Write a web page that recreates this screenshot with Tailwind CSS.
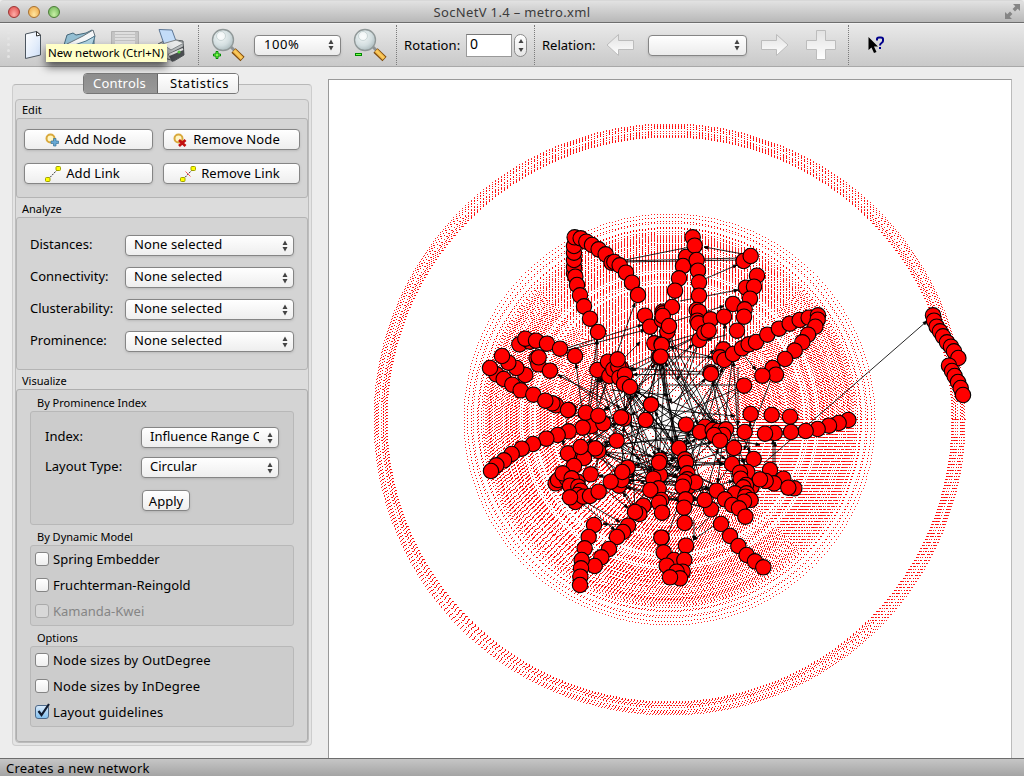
<!DOCTYPE html>
<html lang="en">
<head>
<meta charset="utf-8">
<title>SocNetV 1.4 – metro.xml</title>
<script src="https://cdn.jsdelivr.net/npm/@tailwindcss/browser@4"></script>
</head>
<body class="w-[1024px] h-[776px] overflow-hidden bg-[#ededed] font-['Noto_Sans',sans-serif] text-[13px] leading-4 text-black flex flex-col">
<svg width="0" height="0" class="absolute">
  <defs>
    <linearGradient id="gold" x1="0" y1="1" x2="1" y2="0"><stop offset="0" stop-color="#b96a10"/><stop offset=".5" stop-color="#ffd060"/><stop offset="1" stop-color="#c97a18"/></linearGradient>
    <radialGradient id="glass" cx=".4" cy=".35" r=".7"><stop offset="0" stop-color="#f4f8f8"/><stop offset=".6" stop-color="#d3dee0"/><stop offset="1" stop-color="#a9b8bb"/></radialGradient>
    <linearGradient id="paper" x1="0" y1="0" x2="1" y2="1"><stop offset="0" stop-color="#fff"/><stop offset="1" stop-color="#cfe0f8"/></linearGradient>
    <linearGradient id="pale" x1="0" y1="0" x2="0" y2="1"><stop offset="0" stop-color="#e2e2e2"/><stop offset="1" stop-color="#fff"/></linearGradient>
    <symbol id="updown" viewBox="0 0 6 12"><path d="M3 0.5 5.500 5h-5zM3 11.500 5.500 7h-5z" fill="#444"/></symbol>
    <symbol id="lens" viewBox="0 0 34 34">
      <path d="M20 19l4 4" stroke="#8d9294" stroke-width="3"/>
      <path d="M22.500 22.500l9 8.500" stroke="#7b4709" stroke-width="6"/>
      <path d="M23 22.500l8 8" stroke="url(#gold)" stroke-width="4"/>
      <circle cx="12" cy="12" r="10.500" fill="url(#glass)" stroke="#909898" stroke-width="1.300"/>
      <circle cx="10" cy="8" r="4.500" fill="#fff" fill-opacity=".55" stroke="#bccaca" stroke-width=".7"/>
    </symbol>
  </defs>
</svg>

<header class="h-[23px] shrink-0 grid grid-cols-[1fr_auto_1fr] items-center rounded-t border-t border-b border-t-[#d8d8d8] border-b-[#6d6d6d] bg-linear-to-b from-[#e2e2e2] to-[#b8b8b8]">
  <div class="flex gap-2 pl-2">
    <span class="size-3 rounded-full border border-[#9c3432] bg-radial-[at_50%_75%] from-[#ffaea8] to-[#dc4443]"></span>
    <span class="size-3 rounded-full border border-[#a8702e] bg-radial-[at_50%_75%] from-[#ffe6a0] to-[#eda23f]"></span>
    <span class="size-3 rounded-full border border-[#4b7c37] bg-radial-[at_50%_75%] from-[#c9f0a6] to-[#66b050]"></span>
  </div>
  <h1 class="text-[13px] tracking-[0.35px] text-[#3b3b3b] whitespace-nowrap">SocNetV 1.4 – metro.xml</h1>
  <svg class="justify-self-end mr-[4px]" width="15" height="15" viewBox="0 0 15 15" fill="#858585"><path d="M8 0h7v7l-2.300-2.300L10 7.400 7.600 5l2.700-2.700zM0 15V8l2.300 2.300L5 7.600 7.400 10l-2.700 2.700L7 15z"/></svg>
</header>

<div class="relative h-11 shrink-0 flex items-center border-t border-b border-t-[#f2f2f2] border-b-[#a8a8a8] bg-linear-to-b from-[#e9e9e9] to-[#c9c9c9]">
  <div class="w-[24px] pl-[7px] flex flex-col gap-[3px] pb-0.5"><i class="size-[3px] rounded-full bg-[#e4e4e4]"></i><i class="size-[3px] rounded-full bg-[#e4e4e4]"></i><i class="size-[3px] rounded-full bg-[#e4e4e4]"></i><i class="size-[3px] rounded-full bg-[#e4e4e4]"></i><i class="size-[3px] rounded-full bg-[#e4e4e4]"></i></div>
  <svg width="174" height="42" viewBox="24 24 174 42" class="shrink-0">
    <path d="M25.500 34l11-2.500 4 3.500v20l-15 3.500z" fill="url(#paper)" stroke="#4c5660"/><path d="M36.500 31.500v4.500l4-1z" fill="#fff" stroke="#333"/>
    <path d="M64 45l3-10 6-2 3 2 10-2 6-3 2 5v18H66z" fill="#93bed2" stroke="#45677a"/><path d="M67 44l16-8 10-6 2 6-18 12z" fill="#f4f6f8" stroke="#68747c"/><path d="M66 48l20-7 9-5-5 18H68z" fill="#b3d6e5" stroke="#4d7488"/>
    <path d="M111.500 31.500h27v26h-27z" fill="#c4c4c4" stroke="#b2b2b2"/><path d="M115 32h20v12h-20z" fill="#dedede"/><path d="M115 34.500h20M115 37.500h20M115 40.500h20" stroke="#c2c2c2"/>
    <path d="M158 44l10-5 15 2 1 14-10 6-16-5z" fill="#b8bbbc" stroke="#52575a"/><path d="M168 54l16-8v9l-12 7z" fill="#4a4d50"/><path d="M169 55l14-6" stroke="#ddd" stroke-width="2"/><path d="M159 29.500l13 .5 4 11-12 3z" fill="#c3dcf8" stroke="#5c7695"/><path d="M162 44l14-4 8 3-13 7z" fill="#e8e9e9" stroke="#83888a"/><circle cx="179" cy="52" r="1.500" fill="#4fca3b"/>
  </svg>
  <div class="h-10 border-l border-dotted border-[#7a7a7a]"></div>
  <div class="relative ml-[12px] size-[34px] shrink-0"><svg width="34" height="34"><use href="#lens"/></svg><svg class="absolute left-[2px] top-[23px]" width="8" height="8" viewBox="0 0 8 8"><path d="M3 .5h2V3h2.500v2H5v2.500H3V5H.5V3H3z" fill="#7cff4e" stroke="#008a00"/></svg></div>
  <div class="ml-[9px] w-[87px] h-[21px] shrink-0 rounded-[4px] border border-[#858585] bg-linear-to-b from-white via-[#f5f5f5] to-[#ececec] shadow-sm flex items-center justify-between pl-[9px] pr-[6px]"><span class="pb-[2px] tracking-[0.6px]">100%</span><svg width="6" height="12"><use href="#updown"/></svg></div>
  <div class="relative ml-[12px] size-[34px] shrink-0"><svg width="34" height="34"><use href="#lens"/></svg><i class="absolute left-[2px] top-[25px] w-[7px] h-[3px] border border-[#008a00] bg-[#7cff4e]"></i></div>
  <div class="ml-[9px] h-10 border-l border-dotted border-[#7a7a7a]"></div>
  <span class="ml-[7px] w-[62px] whitespace-nowrap tracking-[0.1px]">Rotation:</span>
  <div class="w-[46px] h-[23px] border border-[#999] border-t-[#777] bg-white pl-[3px] text-[14px] leading-[18px]">0</div>
  <div class="ml-[2px] w-[13px] h-[23px] rounded-full border border-[#8b8b8b] bg-linear-to-b from-white to-[#e6e6e6] flex items-center justify-center"><svg width="6" height="15" viewBox="0 0 6 15"><path d="M3 1 5.500 5h-5zM3 14 5.500 10h-5z" fill="#444"/></svg></div>
  <div class="ml-[7px] h-10 border-l border-dotted border-[#7a7a7a]"></div>
  <span class="ml-[7px] w-[64px] whitespace-nowrap">Relation:</span>
  <svg width="28" height="24" viewBox="0 0 28 24" class="shrink-0"><path d="M1 12 12.500 1.500V7.500h15v9h-15v6z" fill="url(#pale)" stroke="#bcbcbc"/></svg>
  <div class="ml-[14px] w-[99px] h-[21px] shrink-0 rounded-[4px] border border-[#858585] bg-linear-to-b from-white via-[#f5f5f5] to-[#ececec] shadow-sm flex items-center justify-end pr-[6px]"><svg width="6" height="12"><use href="#updown"/></svg></div>
  <svg width="28" height="24" viewBox="0 0 28 24" class="ml-[14px] shrink-0"><path d="M27 12 15.500 1.500V7.500H.5v9h15v6z" fill="url(#pale)" stroke="#bcbcbc"/></svg>
  <svg width="30" height="30" viewBox="0 0 30 30" class="ml-[17px] shrink-0"><path d="M10.500.5h9v10h10v9h-10v10h-9v-10H.5v-9h10z" fill="url(#pale)" stroke="#bcbcbc"/></svg>
  <div class="ml-[12px] h-10 border-l border-dotted border-[#7a7a7a]"></div>
  <svg width="18" height="18" viewBox="0 0 18 18" class="ml-[19px] shrink-0"><path d="M.5 1v13l3-2.500L6 17l2.500-1L6 10.500h4z"/><path d="M9 4.500V3q0-1.500 2-1.500h2q2 0 2 1.500v2q0 1-1.500 2T12 9.500M12 11v2" fill="none" stroke="#00008b" stroke-width="2"/></svg>
  <div class="absolute left-[46px] top-[20px] w-[121px] h-[18px] bg-[#ffffc8] shadow-[0_5px_9px_rgba(0,0,0,.6)] pl-[2px] text-[11.500px] leading-[18px] whitespace-nowrap">New network (Ctrl+N)</div>
</div>

<div class="flex h-[691px] shrink-0">
  <aside class="relative w-[328px] pl-[12px] pt-[17px]">
    <div class="absolute left-[83px] top-[6px] h-[21px] w-[156px] flex text-center leading-[18px] rounded-[4px] border border-[#777] overflow-hidden">
      <div class="w-[74px] bg-linear-to-b from-[#8d8d8d] to-[#999] border-r border-[#666] text-white pr-[2px] tracking-[0.2px]">Controls</div><div class="grow bg-linear-to-b from-white to-[#eee] pl-[3px] tracking-[0.5px]">Statistics</div>
    </div>
    <div class="w-[300px] h-[662px] rounded-[4px] border border-[#cdcdcd] border-t-[#b8b8b8] bg-[#e4e4e4] pt-[14px] px-[2px]">
      <div class="h-[644px] rounded-[4px] border border-[#bcbcbc] bg-[#dcdcdc] flex flex-col text-[11px]">
        <h2 class="h-[18px] pl-[6px] leading-[20px]">Edit</h2>
        <section class="h-[80px] rounded-[3px] border border-[#b4b4b4] bg-[#d4d4d4] grid grid-cols-[129px_137px] gap-x-[10px] gap-y-[13px] content-start pt-[10px] pl-[7px] text-[13px]">
          <button class="h-[21px] rounded-[4px] border border-[#858585] bg-linear-to-b from-white to-[#eee] shadow-sm flex items-center justify-center gap-[6px] leading-none pr-[6px] tracking-[0.1px]"><svg width="14" height="14" viewBox="0 0 14 14"><circle cx="5.500" cy="5.500" r="4" fill="#fff6c4" stroke="#d9a93c" stroke-width="2"/><path d="M8.500 5.500h2.500V8h2.500v2.500H11V13H8.500v-2.500H6V8h2.500z" fill="#67a9d6" stroke="#3a7297" stroke-width=".7"/></svg>Add Node</button>
          <button class="h-[21px] rounded-[4px] border border-[#858585] bg-linear-to-b from-white to-[#eee] shadow-sm flex items-center justify-center gap-[6px] leading-none pr-[10px] tracking-[0.1px]"><svg width="14" height="14" viewBox="0 0 14 14"><circle cx="5.500" cy="5.500" r="4" fill="#fff6c4" stroke="#d9a93c" stroke-width="2"/><path d="M6 7l6.500 6M12.500 7L6 13" stroke="#c21010" stroke-width="2.700"/></svg>Remove Node</button>
          <button class="h-[21px] rounded-[4px] border border-[#858585] bg-linear-to-b from-white to-[#eee] shadow-sm flex items-center justify-center gap-[5px] leading-none pr-[12px] tracking-[0.1px]"><svg width="16" height="16" viewBox="0 0 16 16"><path d="M3 13.500L13 3" stroke="#333" stroke-dasharray="2 1"/><rect x=".5" y="11.500" width="4.500" height="4" rx="1" fill="#ff0" stroke="#a0a000"/><rect x="11" y=".5" width="4.500" height="4" rx="1" fill="#ff0" stroke="#a0a000"/></svg>Add Link</button>
          <button class="h-[21px] rounded-[4px] border border-[#858585] bg-linear-to-b from-white to-[#eee] shadow-sm flex items-center justify-center gap-[5px] leading-none pr-[3px] tracking-[0.1px]"><svg width="16" height="16" viewBox="0 0 16 16"><path d="M3 13.500L13 3" stroke="#333" stroke-dasharray="2 1"/><path d="M5.500 5.500l5 5" stroke="#f55"/><rect x=".5" y="11.500" width="4.500" height="4" rx="1" fill="#ff0" stroke="#a0a000"/><rect x="11" y=".5" width="4.500" height="4" rx="1" fill="#ff0" stroke="#a0a000"/></svg>Remove Link</button>
        </section>
        <h2 class="h-[19px] pl-[6px] leading-[21px]">Analyze</h2>
        <section class="h-[153px] rounded-[3px] border border-[#b4b4b4] bg-[#d4d4d4] pl-[13px] pt-[17px] flex flex-col gap-[11px] text-[13px]">
          <label class="flex h-[21px]"><span class="w-[95px] leading-[18px]">Distances:</span><span class="w-[169px] rounded-[4px] border border-[#858585] bg-linear-to-b from-white to-[#eee] shadow-sm flex items-center justify-between pl-2 pr-[5px] leading-[17px]"><span class="pb-0.5 tracking-[0.1px]">None selected</span><svg width="6" height="12"><use href="#updown"/></svg></span></label>
          <label class="flex h-[21px]"><span class="w-[95px] leading-[18px]">Connectivity:</span><span class="w-[169px] rounded-[4px] border border-[#858585] bg-linear-to-b from-white to-[#eee] shadow-sm flex items-center justify-between pl-2 pr-[5px] leading-[17px]"><span class="pb-0.5 tracking-[0.1px]">None selected</span><svg width="6" height="12"><use href="#updown"/></svg></span></label>
          <label class="flex h-[21px]"><span class="w-[95px] leading-[18px]">Clusterability:</span><span class="w-[169px] rounded-[4px] border border-[#858585] bg-linear-to-b from-white to-[#eee] shadow-sm flex items-center justify-between pl-2 pr-[5px] leading-[17px]"><span class="pb-0.5 tracking-[0.1px]">None selected</span><svg width="6" height="12"><use href="#updown"/></svg></span></label>
          <label class="flex h-[21px]"><span class="w-[95px] leading-[18px]">Prominence:</span><span class="w-[169px] rounded-[4px] border border-[#858585] bg-linear-to-b from-white to-[#eee] shadow-sm flex items-center justify-between pl-2 pr-[5px] leading-[17px]"><span class="pb-0.5 tracking-[0.1px]">None selected</span><svg width="6" height="12"><use href="#updown"/></svg></span></label>
        </section>
        <h2 class="h-[19px] pl-[6px] leading-[21px]">Visualize</h2>
        <section class="h-[353px] rounded-[3px] border border-[#aeaeae] bg-[#d4d4d4] px-[13px] flex flex-col">
          <h3 class="h-[21px] pl-[7px] leading-[26px]">By Prominence Index</h3>
          <div class="h-[114px] rounded-[3px] border border-[#b8b8b8] bg-[#ccc] pl-[14px] pt-[15px] text-[13px]">
            <label class="flex h-[21px]"><span class="w-[96px] leading-[18px]">Index:</span><span class="w-[138px] rounded-[4px] border border-[#858585] bg-linear-to-b from-white to-[#eee] shadow-sm flex items-center justify-between pl-2 pr-[5px] leading-[17px]"><span class="pb-0.5 w-[109px] overflow-hidden whitespace-nowrap">Influence Range Closeness</span><svg width="6" height="12"><use href="#updown"/></svg></span></label>
            <label class="flex h-[21px] mt-[9px]"><span class="w-[96px] leading-[18px]">Layout Type:</span><span class="w-[138px] rounded-[4px] border border-[#858585] bg-linear-to-b from-white to-[#eee] shadow-sm flex items-center justify-between pl-2 pr-[5px] leading-[17px]"><span class="pb-0.5">Circular</span><svg width="6" height="12"><use href="#updown"/></svg></span></label>
            <button class="ml-[97px] mt-[12px] w-[48px] h-[21px] rounded-[4px] border border-[#858585] bg-linear-to-b from-white to-[#eee] shadow-sm leading-[18px]">Apply</button>
          </div>
          <h3 class="h-[20px] pl-[7px] leading-[24px]">By Dynamic Model</h3>
          <div class="h-[81px] rounded-[3px] border border-[#b8b8b8] bg-[#ccc] pl-[4px] pt-[5px] flex flex-col gap-[10px] text-[13px]">
            <label class="flex items-center h-4 gap-1"><i class="size-[14px] rounded-[3px] border border-[#858585] bg-linear-to-b from-white to-[#eee]"></i>Spring Embedder</label>
            <label class="flex items-center h-4 gap-1"><i class="size-[14px] rounded-[3px] border border-[#858585] bg-linear-to-b from-white to-[#eee]"></i>Fruchterman-Reingold</label>
            <label class="flex items-center h-4 gap-1 text-[#858585]"><i class="size-[14px] rounded-[3px] border border-[#aaa] bg-[#d8d8d8]"></i>Kamanda-Kwei</label>
          </div>
          <h3 class="h-[20px] pl-[7px] leading-[23px]">Options</h3>
          <div class="h-[81px] rounded-[3px] border border-[#b8b8b8] bg-[#ccc] pl-[4px] pt-[5px] flex flex-col gap-[10px] text-[13px] tracking-[0.15px]">
            <label class="flex items-center h-4 gap-1"><i class="size-[14px] rounded-[3px] border border-[#858585] bg-linear-to-b from-white to-[#eee]"></i>Node sizes by OutDegree</label>
            <label class="flex items-center h-4 gap-1"><i class="size-[14px] rounded-[3px] border border-[#858585] bg-linear-to-b from-white to-[#eee]"></i>Node sizes by InDegree</label>
            <label class="flex items-center h-4 gap-1"><i class="size-[14px] rounded-[3px] border border-[#4c6889] bg-linear-to-b from-[#d7e9fa] to-[#83c0ee]"><svg class="-mt-[3px]" width="15" height="15" viewBox="0 0 15 15"><path d="M2.500 8l3 4L13 1" fill="none" stroke="#111c30" stroke-width="2.200"/></svg></i>Layout guidelines</label>
          </div>
        </section>
      </div>
    </div>
  </aside>
  <main class="relative mt-[12px] w-[684px] h-[679px] border-t border-l border-r border-[#999] border-r-[#bbb] bg-white">
    <canvas id="rings" width="682" height="678" class="absolute left-0 top-0"></canvas>
    <svg class="relative" width="682" height="678" viewBox="329 80 682 678"><g id="edges" stroke="#000" stroke-width="1" stroke-opacity=".85"></g><g id="nodes" fill="#f00" stroke="#000" stroke-width="1.100"></g></svg>
  </main>
</div>

<footer class="h-[18px] shrink-0 border-t border-[#6d6d6d] bg-linear-to-b from-[#c6c6c6] to-[#a4a4a4] pl-[6px] leading-[18px] tracking-[0.2px]">Creates a new network</footer>

<script>
// Each tile: origin in scene units, then node centres in thirds of a unit.
const tiles = [
[470,210,"312,190 312,171 312,150 312,128 312,108 316,200 321,225 330,256 342,289 360,326 384,366 314,82 332,85 349,95 366,105 386,118 407,133 425,158 433,156 449,166 468,188 486,218 504,255 148,403 180,395 166,386 198,392 231,401 270,416 315,438 200,445 205,463 206,442 240,482 166,495 139,474 115,458 96,438 79,493 60,474 101,507 127,524 152,541 190,554 258,586 247,580 226,572 296,600 382,480 418,498 414,455 430,478 453,474 445,470 443,448 448,503 465,494 462,522 480,531 525,317 540,350 578,305 576,330 543,583 553,400 575,402 566,442 570,440"],
[660,210,"98,82 78,141 104,107 69,168 57,205 110,150 114,182 45,242 117,217 117,257 10,310 36,291 110,300 117,305 112,332 115,340 118,390 133,368 152,328 146,362 192,320 219,282 251,153 272,138 291,197 258,233 282,230 270,266 254,298 252,320 231,362 8,318 22,365 27,348 5,405 2,440 190,418 180,442 193,450 219,432 246,415 266,403 288,396 322,374 357,356 389,341 419,330 446,323 474,316 473,329 466,350 444,374 427,397 404,422 375,447 338,474 348,494 307,497 252,527 152,487 153,492"],
[470,400,"294,30 364,78 400,70 338,83 347,38 385,47 296,94 263,105 229,116 189,132 155,146 125,162 102,181 79,196 63,213 462,56 453,52 527,60 543,14 440,122 385,153 376,145 333,165 342,174 294,160 332,141 312,198 362,223 257,250 264,240 290,235 278,220 322,245 305,235 300,257 325,260 332,272 322,285 316,306 340,290 300,292 360,288 386,275 447,257 455,240 473,203 457,216 422,245 570,225 570,180 567,188 550,236 566,265 541,270 574,300 567,308 576,338 520,317 508,342 495,336 474,377 459,396 441,411 417,447 394,472 374,498 372,375 356,411 344,445 335,480 333,505 331,530 330,555 575,413"],
[660,400,"272,42 335,45 390,50 565,60 536,69 507,77 473,87 437,93 393,96 344,99 315,101 254,96 78,74 135,80 120,96 158,90 175,93 198,88 190,105 162,105 180,122 222,144 281,177 57,144 75,178 78,188 82,220 82,238 85,260 106,247 72,245 68,260 77,298 72,323 74,369 78,437 262,216 216,192 240,218 242,236 275,260 258,255 250,262 225,280 260,280 256,290 272,300 252,305 170,272 195,298 153,328 134,300 217,315 237,325 256,350 330,210 370,236 342,250 317,243 300,238 403,265 385,263 183,372 210,408 235,438 260,465 285,484 310,502 4,413 11,457 42,480 20,497 73,480 68,515 50,515 60,535 30,532"],
[840,290,"279,76 282,92 290,110 300,124 309,139 321,157 333,170 342,184 355,204 327,227 336,243 344,258 354,276 362,294 369,315"]];
const NS = "http://www.w3.org/2000/svg", CX = 669.5, CY = 419.5;
const add = (g, tag, a) => { const e = document.createElementNS(NS, tag); for (const k in a) e.setAttribute(k, a[k]); g.appendChild(e); };
const pts = tiles.flatMap(([x, y, s]) => s.split(" ").map(p => { const [a, b] = p.split(",").map(Number); return [x + a / 3, y + b / 3]; }));
const edges = document.getElementById("edges"), nodes = document.getElementById("nodes");

// Guideline rings: aliased dots, one in three steps along the major axis, clockwise from 3 o'clock.
const ctx = document.getElementById("rings").getContext("2d");
const seen = new Set();
function ring(r) {
  let step = 0;
  const m = Math.round(r * Math.SQRT1_2);
  const dot = (x, y) => {
    if (step++ % 3) return;
    const frac = Math.abs((r * 2) % 2 - 1);
    ctx.fillStyle = frac > 0.5 ? "#ff0000" : "#ff2a2a";
    ctx.fillRect(Math.round(CX + x - 329.5), Math.round(CY + y - 80.5), 1, 1);
  };
  const f = t => Math.sqrt(Math.max(0, r * r - t * t));
  for (let y = 0; y < m; y++) dot(f(y), y);
  for (let x = m; x > -m; x--) dot(x, f(x));
  for (let y = m; y > -m; y--) dot(-f(y), y);
  for (let x = -m; x < m; x++) dot(x, -f(x));
  for (let y = -m; y < 0; y++) dot(f(y), y);
}
for (const [x, y] of pts) {
  const r = Math.round(Math.hypot(x - CX, y - CY) * 2) / 2;
  if (!seen.has(r)) { seen.add(r); ring(r); }
}

function edge(x1, y1, x2, y2) {
  add(edges, "line", { x1, y1, x2, y2 });
  const d = Math.hypot(x2 - x1, y2 - y1) || 1, u = (x2 - x1) / d, v = (y2 - y1) / d;
  add(edges, "path", { d: `M${x2} ${y2}L${x2 - 4*u - 1.5*v} ${y2 - 4*v + 1.5*u}L${x2 - 4*u + 1.5*v} ${y2 - 4*v - 1.5*u}Z` });
}
[[764,463,927,321],[620,261,695,246],[622,262,741,260],[622,261,741,258],[743,254,704,247],[700,281,737,265],[680,301,738,290],[665,324,724,306],[662,385,742,385],[738,367,738,425],[773,469,773,440],[775,466,775,442],[567,416,640,342],[567,348,642,325],[568,350,645,330],[597,470,597,340],[588,410,597,340],[600,400,635,303],[582,410,576,364],[625,410,558,375],[597,400,598,378],[770,382,744,450],[712,320,677,380],[724,340,725,324],[746,310,738,330],[726,335,707,340],[743,354,756,370],[606,490,628,508],[584,505,615,530],[582,500,620,522],[630,525,603,524],[694,520,694,540],[715,525,693,540],[696,530,727,500],[668,535,680,500],[640,500,685,440],[600,450,745,385],[610,390,668,395],[590,447,640,390],[720,340,713,374],[663,364,671,403],[661,365,718,425],[668,360,700,430],[730,360,688,434],[600,450,655,485],[590,420,640,460],[563,375,610,410],[545,405,590,420],[568,413,563,445],[700,435,720,463],[640,420,760,445],[668,395,714,350],[671,404,728,362],[674,403,718,350],[668,410,735,416],[665,407,611,378],[669,412,604,447],[672,414,672,462]].forEach(e => edge(...e));
// Remaining ties of the dense core.
let s = 11; const rnd = () => (s = (s * 16807) % 2147483647) / 2147483647;
const core = pts.filter(([x, y]) => Math.hypot(x - CX, y - CY) < 100);
for (let i = 0; i < 150; i++) {
  const a = core[Math.floor(rnd() * core.length)], b = core[Math.floor(rnd() * core.length)];
  const d = Math.hypot(a[0] - b[0], a[1] - b[1]);
  if (d > 30 && d < 150) edge(a[0], a[1], b[0] - (b[0] - a[0]) * 8 / d, b[1] - (b[1] - a[1]) * 8 / d);
}
for (const [cx, cy] of pts) add(nodes, "circle", { cx, cy, r: 7.7 });
</script>
</body>
</html>
